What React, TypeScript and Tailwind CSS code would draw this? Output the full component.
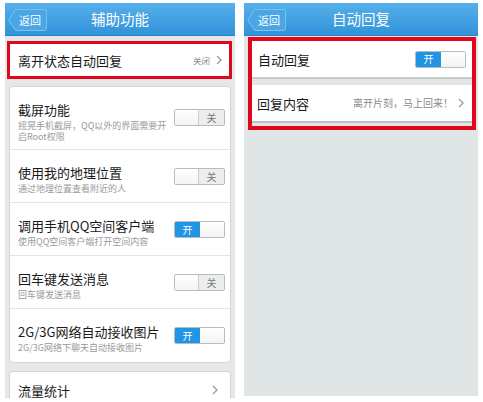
import React from "react";

const FONT = { fontFamily: '"Noto Sans CJK SC", "Noto Sans", sans-serif' };

function Chevron() {
  return (
    <svg width="6" height="10" viewBox="0 0 6 10" className="shrink-0">
      <polyline points="1,1 5,5 1,9" fill="none" stroke="#9a9a9a" strokeWidth="1.3" />
    </svg>
  );
}

function Toggle({ on }: { on: boolean }) {
  return (
    <div className="w-[51px] h-[17px] border border-[#b8bcbe] rounded-[2px] flex overflow-hidden shrink-0 bg-white">
      {on ? (
        <>
          <div className="w-[25px] h-full bg-[#2194e4] flex items-center justify-center text-white text-[10px] leading-none">开</div>
          <div className="flex-1 h-full bg-linear-to-b from-white to-[#f3f3f3]"></div>
        </>
      ) : (
        <>
          <div className="w-[24px] h-full bg-linear-to-b from-white to-[#f4f4f4] border-r border-[#c9cccd]"></div>
          <div className="flex-1 h-full bg-[#eceeee] flex items-center justify-center text-[#777] text-[10px] leading-none">关</div>
        </>
      )}
    </div>
  );
}

function Header({ title }: { title: string }) {
  return (
    <div className="h-[33px] shrink-0 relative flex items-center justify-center bg-linear-to-b from-[#55b0ea] to-[#3193da] border-b border-[#2a84c8]">
      <div className="absolute left-[3px] top-[6px] w-[39px] h-[22px] flex items-center justify-center">
        <svg width="39" height="22" viewBox="0 0 39 22" className="absolute left-0 top-0">
          <path d="M7.5 0.5 H36.5 Q38.5 0.5 38.5 2.5 V19.5 Q38.5 21.5 36.5 21.5 H7.5 L0.8 11 Z" fill="#4aa6e4" stroke="#7cc2ee" strokeWidth="1" />
        </svg>
        <span className="relative text-white text-[11px] leading-none pl-[5px]">返回</span>
      </div>
      <span className="text-white text-[14.5px] leading-none">{title}</span>
    </div>
  );
}

function SettingRow({ title, sub, on, last, tall }: { title: string; sub: string[]; on: boolean; last?: boolean; tall?: boolean }) {
  return (
    <div className={`shrink-0 flex items-start justify-between pl-[8px] pr-[5px] ${tall ? "h-[63px] pt-[14px]" : "h-[53px] pt-[14px]"} ${last ? "" : "border-b border-[#e2e4e5]"}`}>
      <div className="flex flex-col min-w-0">
        <div className="text-[13px] leading-[17px] text-[#1a1a1a] whitespace-nowrap">{title}</div>
        <div className="flex flex-col mt-[2px]">
          {sub.map((s) => (
            <div key={s} className="text-[9px] leading-[12px] h-[11px] text-[#9a9a9a] whitespace-nowrap">{s}</div>
          ))}
        </div>
      </div>
      <div className={tall ? "pt-[8px]" : "pt-[4px]"}>
        <Toggle on={on} />
      </div>
    </div>
  );
}

export default function App() {
  return (
    <div className="w-[483px] h-[402px] bg-white flex pl-[5px] pt-[3px] gap-[9px] overflow-hidden" style={FONT}>
      {/* Left phone */}
      <div className="w-[230px] h-[395px] shrink-0 bg-[#e4e8e9] flex flex-col overflow-hidden">
        <Header title="辅助功能" />
        <div className="shrink-0 mt-[5px] ml-[2px] mr-[3px] border-[3px] border-[#e1061b] bg-white h-[38px] flex items-center justify-between pl-[8px] pr-[7px]">
          <span className="text-[13px] leading-none text-[#1a1a1a]">离开状态自动回复</span>
          <div className="flex items-center gap-[6px]">
            <span className="text-[8.5px] text-[#8a8a8a] leading-none">关闭</span>
            <Chevron />
          </div>
        </div>
        <div className="shrink-0 mt-[7px] mx-[4px] bg-white border border-[#d3d6d7] rounded-[4px] flex flex-col">
          <SettingRow tall title="截屏功能" sub={["摇晃手机截屏，QQ以外的界面需要开", "启Root权限"]} on={false} />
          <SettingRow title="使用我的地理位置" sub={["通过地理位置查看附近的人"]} on={false} />
          <SettingRow title="调用手机QQ空间客户端" sub={["使用QQ空间客户端打开空间内容"]} on={true} />
          <SettingRow title="回车键发送消息" sub={["回车键发送消息"]} on={false} />
          <SettingRow last title="2G/3G网络自动接收图片" sub={["2G/3G网络下聊天自动接收图片"]} on={true} />
        </div>
        <div className="shrink-0 mt-[8px] mx-[4px] bg-white border border-[#d3d6d7] rounded-[4px] h-[40px] flex items-start justify-between pl-[8px] pr-[12px] pt-[10px]">
          <span className="text-[13px] leading-[17px] text-[#1a1a1a]">流量统计</span>
          <div className="pt-[3px]">
            <Chevron />
          </div>
        </div>
      </div>

      {/* Right phone */}
      <div className="w-[234px] h-[393px] shrink-0 bg-[#e0e5e5] flex flex-col overflow-hidden">
        <Header title="自动回复" />
        <div className="shrink-0 mt-[1px] ml-[4px] mr-[2px] border-[4px] border-[#e1061b] bg-[#e2e6e6] flex flex-col pb-[3px]">
          <div className="h-[38px] bg-white flex items-center justify-between pl-[6px] pr-[6px] border-b-[2px] border-[#c9cccc]">
            <span className="text-[13px] leading-none text-[#1a1a1a]">自动回复</span>
            <Toggle on={true} />
          </div>
          <div className="h-[6px]"></div>
          <div className="h-[38px] bg-white flex items-center justify-between pl-[5px] pr-[8px] border-b-[2px] border-[#bfc2c2]">
            <span className="text-[13px] leading-none text-[#1a1a1a]">回复内容</span>
            <div className="flex items-center gap-[5px]">
              <span className="text-[10px] text-[#8a8a8a] leading-none">离开片刻，马上回来！</span>
              <Chevron />
            </div>
          </div>
        </div>
      </div>
    </div>
  );
}
